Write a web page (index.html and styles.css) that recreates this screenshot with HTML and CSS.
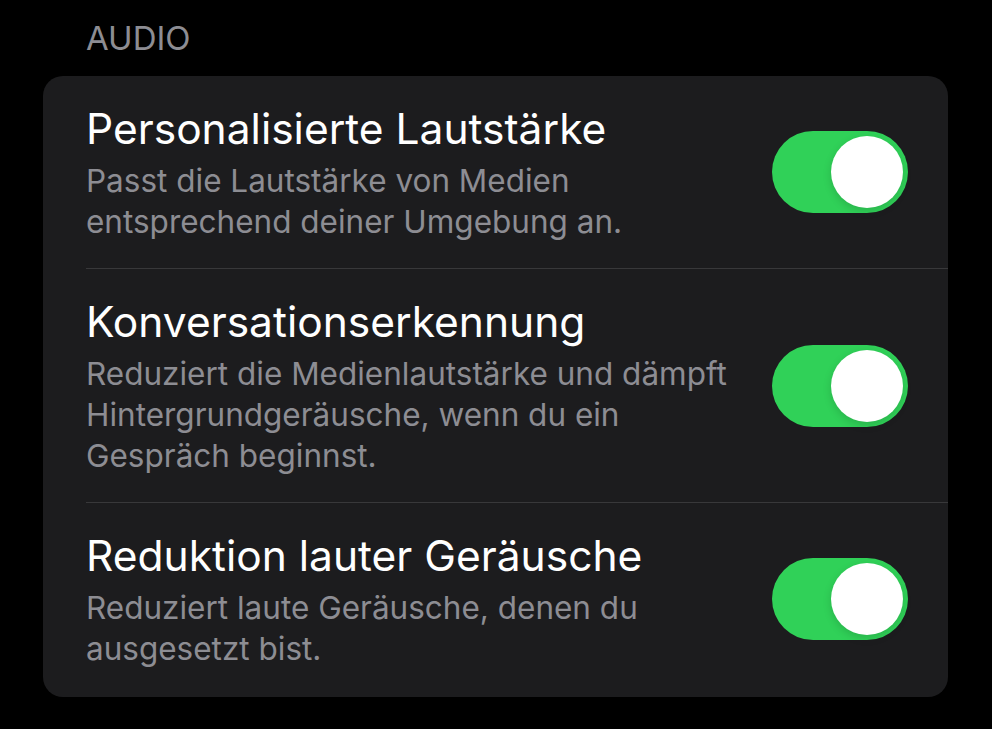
FILE: index.html
```html
<!DOCTYPE html>
<html lang="de">
<head>
    <meta charset="UTF-8">
    <meta name="viewport" content="width=device-width, initial-scale=1.0">
    <title>Audio</title>
    <link rel="stylesheet" href="styles.css">
</head>
<body>
    <div class="section">
        <div class="section-header">AUDIO</div>

        <div class="group">
            <div class="row">
                <div class="row-text">
                    <div class="row-title">Personalisierte Lautstärke</div>
                    <div class="row-subtitle">Passt die Lautstärke von Medien<br>entsprechend deiner Umgebung an.</div>
                </div>
                <div class="switch on"><span class="knob"></span></div>
            </div>

            <div class="row">
                <div class="row-text">
                    <div class="row-title">Konversationserkennung</div>
                    <div class="row-subtitle">Reduziert die Medienlautstärke und dämpft<br>Hintergrundgeräusche, wenn du ein<br>Gespräch beginnst.</div>
                </div>
                <div class="switch on"><span class="knob"></span></div>
            </div>

            <div class="row">
                <div class="row-text">
                    <div class="row-title">Reduktion lauter Geräusche</div>
                    <div class="row-subtitle">Reduziert laute Geräusche, denen du<br>ausgesetzt bist.</div>
                </div>
                <div class="switch on"><span class="knob"></span></div>
            </div>
        </div>
    </div>
</body>
</html>
```

FILE: styles.css
```css
body {
    margin: 0;
    background-color: #000;
    font-family: Inter, "Noto Sans", sans-serif;
    color: #fff;
}

.section {
    padding: 16px 44px 0 43px;
}

.section-header {
    padding-left: 43px;
    font-size: 33px;
    line-height: 44px;
    color: #8d8d93;
    margin-bottom: 16px;
}

.group {
    background-color: #1c1c1e;
    border-radius: 20px;
    overflow: hidden;
}

.row {
    display: flex;
    align-items: center;
    margin-left: 43px;
    padding: 29px 40px 26px 0;
    border-bottom: 1px solid #38383a;
}

.row:last-child {
    border-bottom: none;
    padding-bottom: 28px;
}

.row-text {
    flex: 1;
}

.row-title {
    font-size: 42.5px;
    line-height: 48px;
    margin-bottom: 7px;
}

.row-subtitle {
    font-size: 31.5px;
    line-height: 41px;
    color: #8d8d93;
}

.switch {
    width: 136px;
    height: 82px;
    margin-bottom: 3px;
    border-radius: 41px;
    background-color: #3a3a3c;
    display: flex;
    align-items: center;
    padding: 0 5px;
    box-sizing: border-box;
}

.switch.on {
    background-color: #30d158;
    justify-content: flex-end;
}

.knob {
    width: 72px;
    height: 72px;
    border-radius: 50%;
    background-color: #fff;
    box-shadow: 0 3px 8px rgba(0, 0, 0, 0.15);
}
```
